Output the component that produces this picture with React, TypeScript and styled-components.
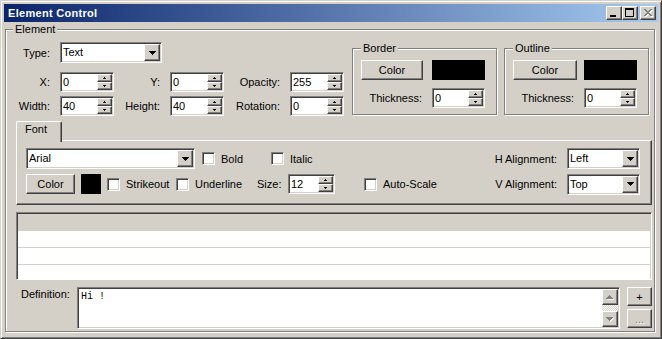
import React from 'react';
import styled, { createGlobalStyle, css } from 'styled-components';

const FACE = '#d4d0c8';
const SHADOW = '#808080';
const DARK = '#404040';

const GlobalStyle = createGlobalStyle`
  * { box-sizing: border-box; }
  html, body { margin: 0; padding: 0; background: ${FACE}; }
  body {
    font-family: 'Liberation Sans', Arial, sans-serif;
    font-size: 11px;
    color: #000;
  }
`;

const raised = css`
  border: 1px solid;
  border-color: #fff ${DARK} ${DARK} #fff;
  box-shadow: inset -1px -1px 0 ${SHADOW}, inset 1px 1px 0 ${FACE};
  background: ${FACE};
`;

const sunken = css`
  border: 1px solid;
  border-color: ${SHADOW} #fff #fff ${SHADOW};
  box-shadow: inset 1px 1px 0 ${DARK}, inset -1px -1px 0 ${FACE};
  background: #fff;
`;

const Window = styled.div`
  width: 662px;
  height: 339px;
  display: flex;
  flex-direction: column;
  padding: 3px;
  border: 1px solid;
  border-color: ${FACE} ${DARK} ${DARK} ${FACE};
  box-shadow: inset 1px 1px 0 #fff, inset -1px -1px 0 ${SHADOW};
  background: ${FACE};
`;

const TitleBar = styled.div`
  height: 18px;
  flex-shrink: 0;
  display: flex;
  align-items: center;
  padding: 0 2px 0 4px;
  background: linear-gradient(to right, #0a246a, #a6caf0);
`;

const Title = styled.div`
  flex: 1;
  color: #fff;
  font-weight: bold;
  letter-spacing: 0.3px;
`;

const CaptionButton = styled.div<{ $gap?: number }>`
  ${raised};
  width: 16px;
  height: 14px;
  margin-left: ${(p) => p.$gap ?? 0}px;
  display: flex;
  align-items: center;
  justify-content: center;
  svg { display: block; }
`;

const GroupBox = styled.div`
  position: relative;
  border: 1px solid ${SHADOW};
  box-shadow: inset 1px 1px 0 #fff, 1px 1px 0 #fff;
`;

const Legend = styled.span<{ $left: number }>`
  position: absolute;
  top: -7px;
  left: ${(p) => p.$left}px;
  padding: 0 2px;
  line-height: 13px;
  background: ${FACE};
`;

const ElementGroup = styled(GroupBox)`
  flex: 1;
  margin: 7px 3px 3px 1px;
  padding-top: 12px;
  display: flex;
  flex-direction: column;
`;

const TopSection = styled.div`
  display: flex;
  align-items: flex-start;
`;

const Fields = styled.div`
  width: 338px;
  flex-shrink: 0;
  display: flex;
  flex-direction: column;
`;

const TypeRow = styled.div`
  display: flex;
  align-items: center;
  height: 21px;
  margin-bottom: 9px;
`;

const FieldGrid = styled.div`
  display: grid;
  grid-template-columns: 54px 54px 56px 54px 66px 54px;
  grid-auto-rows: 20px;
  row-gap: 4px;
  align-items: center;
`;

const FieldLabel = styled.div<{ $w?: number; $align?: string }>`
  text-align: ${(p) => p.$align ?? 'right'};
  padding-right: 10px;
  white-space: nowrap;
  ${(p) => (p.$w ? `width: ${p.$w}px; flex-shrink: 0;` : '')}
`;

const SpinFrame = styled.div<{ $w: number }>`
  ${sunken};
  width: ${(p) => p.$w}px;
  height: 20px;
  padding: 1px;
  display: flex;
  flex-shrink: 0;
`;

const FieldValue = styled.div<{ $lh: number }>`
  flex: 1;
  padding-left: 1px;
  line-height: ${(p) => p.$lh}px;
  white-space: nowrap;
`;

const SpinButtons = styled.div`
  width: 15px;
  display: flex;
  flex-direction: column;
`;

const SpinButton = styled.div`
  ${raised};
  height: 8px;
  display: flex;
  align-items: center;
  justify-content: center;
  svg { display: block; }
`;

const ComboFrame = styled.div<{ $w: number }>`
  ${sunken};
  width: ${(p) => p.$w}px;
  height: 21px;
  padding: 1px;
  display: flex;
  flex-shrink: 0;
`;

const DropButton = styled.div`
  ${raised};
  width: 16px;
  display: flex;
  align-items: center;
  justify-content: center;
  svg { display: block; }
`;

const SubGroup = styled(GroupBox)<{ $ml: number }>`
  width: 145px;
  height: 67px;
  margin-top: 6px;
  margin-left: ${(p) => p.$ml}px;
  padding: 11px 0 0 8px;
  display: flex;
  flex-direction: column;
  gap: 8px;
  flex-shrink: 0;
`;

const SubRow = styled.div`
  display: flex;
  align-items: center;
  height: 20px;
`;

const PushButton = styled.div<{ $w: number; $h?: number; $disabled?: boolean }>`
  ${raised};
  width: ${(p) => p.$w}px;
  height: ${(p) => p.$h ?? 20}px;
  flex-shrink: 0;
  display: flex;
  align-items: center;
  justify-content: center;
  color: ${(p) => (p.$disabled ? SHADOW : '#000')};
  text-shadow: ${(p) => (p.$disabled ? '1px 1px 0 #fff' : 'none')};
`;

const Swatch = styled.div<{ $w: number; $ml: number }>`
  width: ${(p) => p.$w}px;
  height: 20px;
  margin-left: ${(p) => p.$ml}px;
  background: #000;
  flex-shrink: 0;
`;

const TabArea = styled.div`
  margin: 5px 2px 0 10px;
  display: flex;
  flex-direction: column;
`;

const TabStrip = styled.div`
  display: flex;
  height: 19px;
`;

const Tab = styled.div`
  position: relative;
  z-index: 1;
  width: 46px;
  height: 21px;
  padding: 1px 0 0 8px;
  background: ${FACE};
  border-left: 1px solid #fff;
  border-top: 1px solid #fff;
  border-right: 1px solid ${DARK};
  border-top-left-radius: 2px;
  border-top-right-radius: 2px;
  box-shadow: inset -1px 0 0 ${SHADOW};
  line-height: 13px;
`;

const TabPanel = styled.div`
  height: 65px;
  border: 1px solid;
  border-color: #fff ${DARK} ${DARK} #fff;
  box-shadow: inset -1px -1px 0 ${SHADOW};
  padding: 7px 11px 0 9px;
  display: flex;
  flex-direction: column;
  gap: 5px;
`;

const PanelRow = styled.div<{ $h: number }>`
  display: flex;
  align-items: center;
  height: ${(p) => p.$h}px;
`;

const Spacer = styled.div`
  flex: 1;
`;

const CheckItem = styled.div<{ $w?: number; $ml?: number }>`
  display: flex;
  align-items: center;
  gap: 6px;
  flex-shrink: 0;
  white-space: nowrap;
  margin-left: ${(p) => p.$ml ?? 0}px;
  ${(p) => (p.$w ? `width: ${p.$w}px;` : '')}
`;

const CheckBox = styled.span`
  ${sunken};
  width: 13px;
  height: 13px;
  flex-shrink: 0;
`;

const ListView = styled.div`
  ${sunken};
  margin: 7px 2px 0 10px;
  height: 68px;
  padding: 1px;
  overflow: hidden;
`;

const ListHeader = styled.div`
  height: 17px;
  background: ${FACE};
`;

const ListRow = styled.div`
  height: 17px;
  background: #fff;
  border-bottom: 1px solid ${FACE};
`;

const DefRow = styled.div`
  display: flex;
  height: 42px;
  margin: 7px 2px 0 0;
`;

const DefLabel = styled.div`
  width: 71px;
  flex-shrink: 0;
  padding: 1px 0 0 15px;
  line-height: 13px;
`;

const DefBox = styled.div`
  ${sunken};
  flex: 1;
  padding: 1px;
  display: flex;
`;

const DefText = styled.div`
  flex: 1;
  padding: 2px 0 0 2px;
  color: #000;
  font-family: 'Liberation Mono', 'Courier New', monospace;
  font-size: 10px;
  line-height: 12px;
`;

const ScrollBar = styled.div`
  width: 16px;
  display: flex;
  flex-direction: column;
`;

const ScrollButton = styled.div`
  ${raised};
  height: 16px;
  display: flex;
  align-items: center;
  justify-content: center;
  svg { display: block; }
`;

const ScrollTrack = styled.div`
  flex: 1;
  background: repeating-conic-gradient(#fff 0 25%, ${FACE} 0 50%) 0 0 / 2px 2px;
`;

const SideButtons = styled.div`
  width: 25px;
  margin-left: 7px;
  display: flex;
  flex-direction: column;
  gap: 3px;
`;

const Triangle: React.FC<{ w: number; up?: boolean; color?: string }> = ({ w, up = false, color = '#000' }) => {
  const h = Math.ceil(w / 2);
  return (
    <svg width={w} height={h} fill={color} shapeRendering="crispEdges">
      {Array.from({ length: h }, (_, i) => (
        <rect key={i} x={i} y={up ? h - 1 - i : i} width={w - 2 * i} height={1} />
      ))}
    </svg>
  );
};

const DisabledTriangle: React.FC<{ up?: boolean }> = ({ up }) => {
  const w = 7;
  const h = 4;
  const rows = Array.from({ length: h }, (_, i) => ({ x: i, y: up ? h - 1 - i : i, w: w - 2 * i }));
  return (
    <svg width={w + 1} height={h + 1} shapeRendering="crispEdges">
      {rows.map((r, i) => (
        <rect key={'w' + i} x={r.x + 1} y={r.y + 1} width={r.w} height={1} fill="#fff" />
      ))}
      {rows.map((r, i) => (
        <rect key={'g' + i} x={r.x} y={r.y} width={r.w} height={1} fill={SHADOW} />
      ))}
    </svg>
  );
};

// pixel runs of the classic close "X": [x, y, width]
const xPixels = [
  [0, 0, 2], [6, 0, 2],
  [1, 1, 2], [5, 1, 2],
  [2, 2, 4],
  [3, 3, 2],
  [2, 4, 4],
  [1, 5, 2], [5, 5, 2],
  [0, 6, 2], [6, 6, 2],
];

const MinGlyph = () => (
  <svg width={14} height={12} shapeRendering="crispEdges">
    <rect x={3} y={8} width={6} height={2} fill="#000" />
  </svg>
);

const MaxGlyph = () => (
  <svg width={14} height={12} shapeRendering="crispEdges" fill="#000">
    <rect x={2} y={1} width={9} height={2} />
    <rect x={2} y={1} width={1} height={9} />
    <rect x={10} y={1} width={1} height={9} />
    <rect x={2} y={9} width={9} height={1} />
  </svg>
);

const CloseGlyph = () => (
  <svg width={14} height={12} shapeRendering="crispEdges">
    {xPixels.map(([x, y, w], i) => (
      <rect key={'w' + i} x={x + 4} y={y + 3} width={w} height={1} fill="#fff" />
    ))}
    {xPixels.map(([x, y, w], i) => (
      <rect key={'g' + i} x={x + 3} y={y + 2} width={w} height={1} fill={SHADOW} />
    ))}
  </svg>
);

const Spin: React.FC<{ value: string; w?: number }> = ({ value, w = 54 }) => (
  <SpinFrame $w={w}>
    <FieldValue $lh={16}>{value}</FieldValue>
    <SpinButtons>
      <SpinButton>
        <Triangle w={3} up />
      </SpinButton>
      <SpinButton>
        <Triangle w={3} />
      </SpinButton>
    </SpinButtons>
  </SpinFrame>
);

const Combo: React.FC<{ value: string; w: number }> = ({ value, w }) => (
  <ComboFrame $w={w}>
    <FieldValue $lh={17}>{value}</FieldValue>
    <DropButton>
      <Triangle w={7} />
    </DropButton>
  </ComboFrame>
);

const Check: React.FC<{ label: string; w?: number; ml?: number }> = ({ label, w, ml }) => (
  <CheckItem $w={w} $ml={ml}>
    <CheckBox />
    <span>{label}</span>
  </CheckItem>
);

const ColorGroup: React.FC<{ title: string; ml: number; btnW: number; gap: number }> = ({ title, ml, btnW, gap }) => (
  <SubGroup $ml={ml}>
    <Legend $left={8}>{title}</Legend>
    <SubRow>
      <PushButton $w={btnW}>Color</PushButton>
      <Swatch $w={53} $ml={gap} />
    </SubRow>
    <SubRow>
      <FieldLabel $w={btnW + gap}>Thickness:</FieldLabel>
      <Spin value="0" w={53} />
    </SubRow>
  </SubGroup>
);

export default function App() {
  return (
    <>
      <GlobalStyle />
      <Window>
        <TitleBar>
          <Title>Element Control</Title>
          <CaptionButton>
            <MinGlyph />
          </CaptionButton>
          <CaptionButton>
            <MaxGlyph />
          </CaptionButton>
          <CaptionButton $gap={2}>
            <CloseGlyph />
          </CaptionButton>
        </TitleBar>

        <ElementGroup>
          <Legend $left={7}>Element</Legend>

          <TopSection>
            <Fields>
              <TypeRow>
                <FieldLabel $w={54}>Type:</FieldLabel>
                <Combo value="Text" w={102} />
              </TypeRow>
              <FieldGrid>
                <FieldLabel>X:</FieldLabel>
                <Spin value="0" />
                <FieldLabel>Y:</FieldLabel>
                <Spin value="0" />
                <FieldLabel>Opacity:</FieldLabel>
                <Spin value="255" />
                <FieldLabel>Width:</FieldLabel>
                <Spin value="40" />
                <FieldLabel>Height:</FieldLabel>
                <Spin value="40" />
                <FieldLabel>Rotation:</FieldLabel>
                <Spin value="0" />
              </FieldGrid>
            </Fields>
            <ColorGroup title="Border" ml={8} btnW={62} gap={9} />
            <ColorGroup title="Outline" ml={7} btnW={64} gap={7} />
          </TopSection>

          <TabArea>
            <TabStrip>
              <Tab>Font</Tab>
            </TabStrip>
            <TabPanel>
              <PanelRow $h={21}>
                <Combo value="Arial" w={169} />
                <Check label="Bold" w={69} ml={7} />
                <Check label="Italic" />
                <Spacer />
                <FieldLabel>H Alignment:</FieldLabel>
                <Combo value="Left" w={73} />
              </PanelRow>
              <PanelRow $h={20}>
                <PushButton $w={49}>Color</PushButton>
                <Swatch $w={20} $ml={6} />
                <Check label="Strikeout" w={69} ml={6} />
                <Check label="Underline" w={81} />
                <FieldLabel $w={31} $align="left">Size:</FieldLabel>
                <Spin value="12" w={47} />
                <Check label="Auto-Scale" ml={29} />
                <Spacer />
                <FieldLabel>V Alignment:</FieldLabel>
                <Combo value="Top" w={73} />
              </PanelRow>
            </TabPanel>
          </TabArea>

          <ListView>
            <ListHeader />
            <ListRow />
            <ListRow />
            <ListRow />
          </ListView>

          <DefRow>
            <DefLabel>Definition:</DefLabel>
            <DefBox>
              <DefText>Hi !</DefText>
              <ScrollBar>
                <ScrollButton>
                  <DisabledTriangle up />
                </ScrollButton>
                <ScrollTrack />
                <ScrollButton>
                  <DisabledTriangle />
                </ScrollButton>
              </ScrollBar>
            </DefBox>
            <SideButtons>
              <PushButton $w={25} $h={19}>+</PushButton>
              <PushButton $w={25} $h={19} $disabled>...</PushButton>
            </SideButtons>
          </DefRow>
        </ElementGroup>
      </Window>
    </>
  );
}
